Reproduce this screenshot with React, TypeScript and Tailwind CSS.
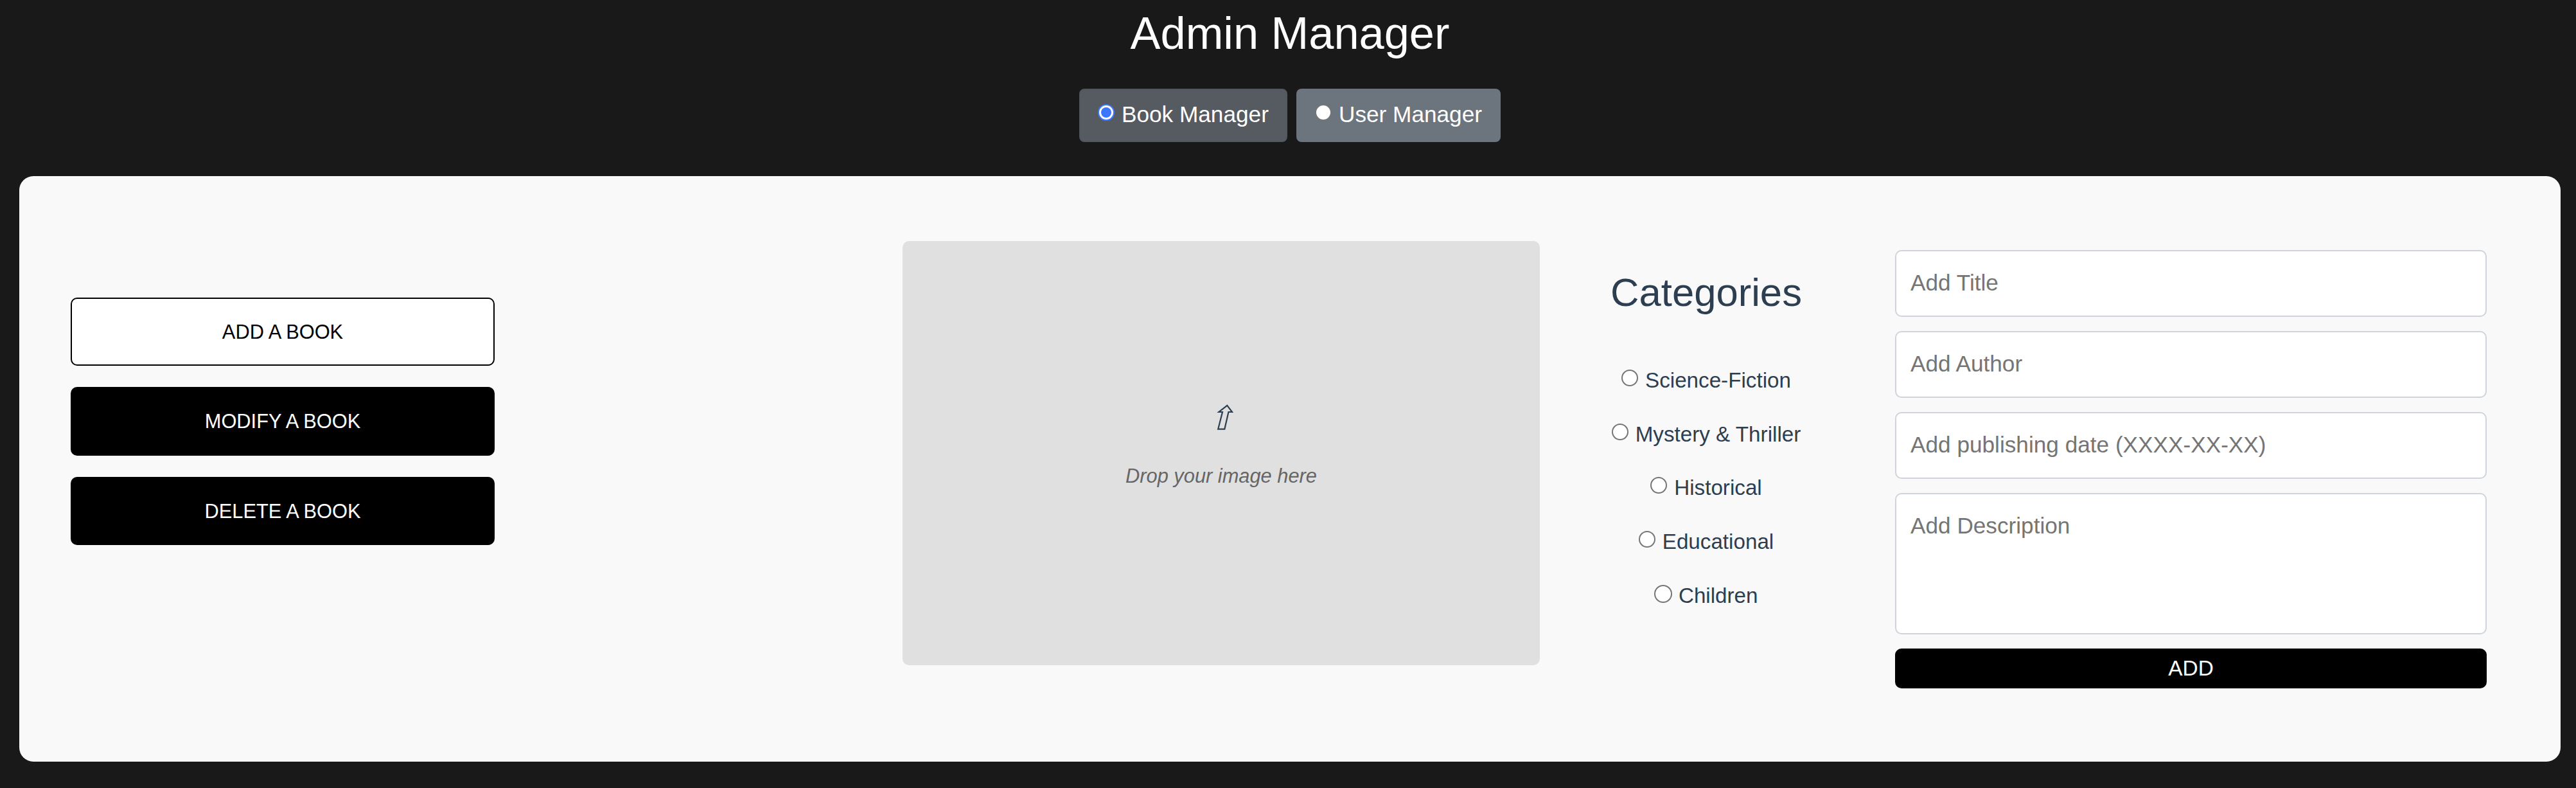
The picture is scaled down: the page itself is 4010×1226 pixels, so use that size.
const categories = [
  { name: "Science-Fiction", dot: "size-[26px] mr-[11px]" },
  { name: "Mystery & Thriller", dot: "size-[26px] mr-[11px]" },
  { name: "Historical", dot: "size-[26px] mr-[11px]" },
  { name: "Educational", dot: "size-[26px] mr-[11px]" },
  { name: "Children", dot: "size-[28px] mr-[9.5px]" },
];

const fields = ["Add Title", "Add Author", "Add publishing date (XXXX-XX-XX)"];

function Header() {
  return (
    <header className="flex h-[274px] w-[4016px] flex-col items-center text-white">
      <h1 className="mt-[10px] text-[70.4px] leading-[84px]">Admin Manager</h1>
      <div className="mt-[44px] flex gap-[14px] text-[35.2px] leading-[53px]">
        <label className="flex h-[83px] w-[324px] rounded-[8px] border-2 border-[#51585e] bg-[#565b61] pl-[27px] pt-[11px]">
          <span className="mt-[11px] mr-[11px] flex size-[26px] items-center justify-center rounded-full border-2 border-[#3b78ff] bg-white">
            <span className="size-[16px] rounded-full bg-[#3b78ff]" />
          </span>
          Book Manager
        </label>
        <label className="flex h-[83px] w-[318px] rounded-[8px] bg-[#6c757d] pl-[29px] pt-[13px]">
          <span className="mt-[11px] mr-[11px] size-[26px] rounded-full border-2 border-[#767676] bg-white" />
          User Manager
        </label>
      </div>
    </header>
  );
}

function Actions() {
  return (
    <nav className="mt-[188.8px] flex w-[660px] flex-col gap-[33px] text-[30.8px]">
      <button className="h-[106.4px] rounded-[10px] border-2 border-black bg-white pt-[2px] text-black">ADD A BOOK</button>
      <button className="h-[106.4px] rounded-[10px] bg-black pt-[2px] text-white">MODIFY A BOOK</button>
      <button className="h-[106.4px] rounded-[10px] bg-black pt-[2px] text-white">DELETE A BOOK</button>
    </nav>
  );
}

function DropZone() {
  return (
    <div className="mt-[101px] ml-[635px] flex h-[660px] w-[992px] flex-col items-center rounded-[10px] bg-[#e0e0e0]">
      <svg className="mt-[253px] ml-[12px]" width="28" height="42" viewBox="0 0 28 42" fill="none" stroke="#2c3e50" strokeWidth="2.2">
        <path d="M17.3 2.8 L25 13 H19.4 L13.3 39.6 H3.2 L10 13 H4.4 Z" />
      </svg>
      <p className="mt-[48px] text-[30.8px] leading-[46px] text-[#666] italic">Drop your image here</p>
    </div>
  );
}

function Categories() {
  return (
    <section className="mt-[144px] ml-[99px] flex w-[320px] flex-col items-center">
      <h3 className="text-[61.6px] leading-[74px]">Categories</h3>
      <div className="mt-[58px] flex flex-col items-center text-[33.2px] leading-[50px]">
        {categories.map((c) => (
          <label key={c.name} className="flex h-[83.7px] pt-[17px]">
            <span className={`mt-[8px] shrink-0 rounded-full border-2 border-[#767676] bg-white ${c.dot}`} />
            {c.name}
          </label>
        ))}
      </div>
    </section>
  );
}

function BookForm() {
  return (
    <form className="mt-[115px] ml-[134px] flex w-[921px] flex-col gap-[22px] text-[35.2px] leading-[53px]">
      {fields.map((f) => (
        <input
          key={f}
          placeholder={f}
          className="h-[104px] rounded-[10px] border-2 border-[#ced4da] bg-white px-[22px] pb-[2px] placeholder:text-[#757575]"
        />
      ))}
      <textarea
        placeholder="Add Description"
        className="block h-[220px] resize-none rounded-[10px] border-2 border-[#ced4da] bg-white px-[22px] py-[22px] placeholder:text-[#757575]"
      />
      <button type="button" className="h-[62px] rounded-[10px] bg-black pb-px text-[33.44px] text-white">
        ADD
      </button>
    </form>
  );
}

export default function App() {
  return (
    <div className="h-[1226px] w-[4010px] overflow-hidden bg-[#191919] font-['Liberation_Sans',Arial,sans-serif]">
      <Header />
      <main className="ml-[30px] flex h-[911px] w-[3956px] items-start rounded-[22px] bg-[#f9f9f9] pl-[80px] text-[#2c3e50]">
        <Actions />
        <DropZone />
        <Categories />
        <BookForm />
      </main>
    </div>
  );
}
